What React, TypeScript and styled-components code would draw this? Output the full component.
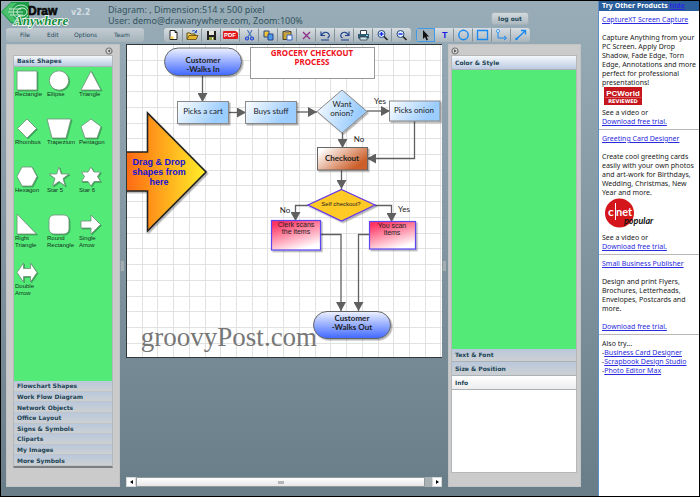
import React, { useState } from "react";
import styled, { createGlobalStyle } from "styled-components";

const sans = `"Liberation Sans", Arial, sans-serif`;
const compact = `Lato, "Liberation Sans", Arial, sans-serif`;
const wide = `"DejaVu Sans", Verdana, sans-serif`;
const humanist = `"Noto Sans", "DejaVu Sans", sans-serif`;

const Global = createGlobalStyle`
  *, *::before, *::after { box-sizing: border-box; }
  body { margin: 0; background: #000; }
  button { font: inherit; color: inherit; margin: 0; padding: 0; border: 0; background: none; cursor: pointer; }
`;

/* ---------- page frame ---------- */

const Page = styled.div`
  display: grid;
  grid-template-columns: minmax(0, 1fr) 101px;
  min-height: 100vh;
  padding: 1px;
  background: #000;
  font-family: ${wide};
`;

const Editor = styled.main`
  display: flex;
  flex-direction: column;
  min-width: 0;
  background: linear-gradient(#98adb7, #687d88);
`;

const Header = styled.header`
  display: flex;
  flex-direction: column;
  height: 43px;
  color: #34535f;
`;

const TitleRow = styled.div`
  display: flex;
  align-items: flex-start;
  height: 27px;
  padding-right: 69px;
`;

const LogoBox = styled.div`
  width: 70px;
  height: 27px;
  svg { display: block; overflow: visible; position: relative; z-index: 1; }
`;

const Version = styled.span`
  width: 37px;
  padding-top: 6px;
  color: #d5dee4;
  font-weight: bold;
  font-size: 8px;
  line-height: 12px;
`;

const Status = styled.p`
  flex: 1;
  margin: 0;
  padding-top: 3px;
  font-family: ${humanist};
  font-size: 9px;
  line-height: 11px;
  white-space: nowrap;
`;

const raised = `
  border: 1px solid #a3b0b8;
  border-radius: 3px;
  background: linear-gradient(#d3dade, #adb9c0);
`;

const LogOut = styled.button`
  ${raised}
  width: 38px;
  height: 13px;
  margin-top: 11px;
  color: #23495a;
  font-weight: bold;
  font-size: 6px;
  line-height: 10px;
`;

const BarRow = styled.div`
  display: flex;
  align-items: flex-start;
  padding-left: 5px;
`;

const MenuBar = styled.nav`
  display: flex;
  width: 138px;
  height: 14px;
  margin-right: 20px;
  padding-left: 14px;
  border-radius: 3px;
  background: linear-gradient(#c3ccd2, #a5b3bb);
`;

const MenuItem = styled.button<{ $width: number }>`
  width: ${(p) => p.$width}px;
  text-align: left;
  color: #23495a;
  font-size: 6px;
  line-height: 14px;
`;

const ToolGroup = styled.div`
  display: flex;
  height: 14px;
  margin-right: 5px;
  border-radius: 3px;
  overflow: hidden;
  background: linear-gradient(#d8dee2, #a9b5bc);
`;

const ToolButton = styled.button<{ $active?: boolean }>`
  display: flex;
  align-items: center;
  justify-content: center;
  width: 19px;
  border: 1px solid ${(p) => (p.$active ? "#3c9bea" : "transparent")};
  border-right-color: ${(p) => (p.$active ? "#3c9bea" : "#84939b")};
  background: ${(p) => (p.$active ? "#a4b2bb" : "none")};
  &:last-child { border-right-color: transparent; }
  svg { display: block; flex: none; }
`;

/* ---------- workspace ---------- */

const Workspace = styled.div`
  display: flex;
  flex: 1;
  padding: 0 17px 9px 5px;
  min-height: 0;
`;

const Panel = styled.aside<{ $width: number; $pad: string }>`
  display: flex;
  flex-direction: column;
  width: ${(p) => p.$width}px;
  padding: ${(p) => p.$pad};
  border: 1px solid #c0c4c6;
  background: #cbcbcb;
`;

const PanelTop = styled.div<{ $end?: boolean }>`
  display: flex;
  align-items: center;
  justify-content: ${(p) => (p.$end ? "flex-end" : "flex-start")};
  height: 10px;
  padding-top: 1px;
  svg { display: block; }
`;

const Accordion = styled.div<{ $heavy?: boolean }>`
  display: flex;
  flex: 1;
  flex-direction: column;
  border: 1px solid #b4b8bb;
  border-bottom: ${(p) => (p.$heavy ? "2px solid #7c7f81" : "1px solid #b4b8bb")};
`;

const Section = styled.button<{ $height: number; $tone?: "open" | "plain" }>`
  flex: none;
  height: ${(p) => p.$height}px;
  padding-left: 3px;
  text-align: left;
  color: #1d4556;
  font-weight: bold;
  font-size: 6px;
  line-height: ${(p) => p.$height - 1}px;
  border-bottom: 1px solid #aab1b7;
  background: ${(p) =>
    p.$tone === "open"
      ? "linear-gradient(#f4f8fc, #bccbe2)"
      : p.$tone === "plain"
        ? "linear-gradient(#ffffff, #ededed)"
        : "linear-gradient(#b9c8dc, #cdd0d2)"};
`;

const SectionList = styled.div`
  display: flex;
  flex-direction: column;
  height: 85px;
  ${Section} { flex: 1; height: auto; line-height: 9px; border-bottom-color: #bfc4c8; }
`;

const Green = styled.div`
  flex: 1;
  background: #54ea78;
`;

const Palette = styled(Green)`
  display: grid;
  grid-template-columns: repeat(3, 32px);
  grid-auto-rows: 48px;
  padding: 2px 0 0 1px;
`;

const ShapeButton = styled.button`
  display: flex;
  flex-direction: column;
  align-items: flex-start;
  text-align: left;
  color: #12331c;
  font-family: ${sans};
  font-size: 6px;
  line-height: 7px;
  svg { display: block; overflow: visible; filter: drop-shadow(1px 1px 0 rgba(20, 90, 40, 0.45)); }
`;

const InfoBody = styled.div`
  height: 82px;
  background: #fff;
`;

const Splitter = styled.div`
  display: flex;
  align-items: center;
  width: 6px;
  &::before { content: ""; width: 4px; height: 10px; background: #a3acb1; border-left: 1px solid #8d989e; }
`;

const Center = styled.section`
  display: flex;
  flex: 1;
  flex-direction: column;
  justify-content: space-between;
  min-width: 0;
`;

const Canvas = styled.div`
  overflow: hidden;
  width: 316px;
  max-width: 100%;
  border: 1px solid #30383c;
  border-right: 0;
  background: #fff;
  svg { display: block; }
`;

const ScrollBar = styled.div`
  display: flex;
  height: 10px;
  background: #a9b1b5;
`;

const ScrollArrow = styled.button`
  display: flex;
  align-items: center;
  justify-content: center;
  width: 10px;
  border: 1px solid #d6d9db;
  background: #fff;
`;

const Thumb = styled.div`
  display: flex;
  flex: 1;
  align-items: center;
  justify-content: center;
  margin-right: 7px;
  border: 1px solid #8f989d;
  border-radius: 1px;
  background: linear-gradient(#fff, #e6e6e6);
  &::before { content: ""; width: 6px; height: 3px; background: #b5b5b5; }
`;

/* ---------- product column ---------- */

const Products = styled.aside`
  overflow: hidden;
  border-left: 1px solid #5b8fc6;
  background: #fff;
  color: #222;
  font-family: ${humanist};
  font-size: 7px;
  line-height: 9px;
  white-space: nowrap;
`;

const ProductsTitle = styled.h2`
  margin: 0;
  padding-left: 3px;
  height: 10px;
  background: #2c609c;
  color: #fff;
  font-size: 7px;
  line-height: 10px;
`;

const Link = styled.a`
  color: #2a2ae0;
  text-decoration: underline;
`;

const Product = styled.section`
  padding: 4px 0 3px 3px;
  border-bottom: 1px solid #b8b8b8;
  &:last-child { border-bottom: 0; }
  p { margin: 0; }
  svg { display: block; }
`;

const Blurb = styled.p`
  && { margin: 9px 0 0; }
  white-space: pre;
`;

const Gap = styled.div`
  height: 9px;
`;

/* ---------- drawings ---------- */

function Logo() {
  return (
    <svg width="70" height="30" viewBox="0 0 70 30" role="img" aria-label="Draw Anywhere">
      <path d="M0 11L10 1H28V20L20 25L10 22z" fill="#1d9c46" />
      <path d="M1 11L10 2H16Q9 7 11 13Q13 19 21 23L11 21z" fill="#49c06c" />
      <ellipse cx="20" cy="11" rx="8" ry="7" fill="none" stroke="#bfe8ca" />
      <ellipse cx="21" cy="11" rx="5" ry="4" fill="none" stroke="#d9f4df" />
      <path d="M8 8H20M7 11H22M9 14H22" stroke="#e6f7ea" strokeWidth="0.800" />
      <text x="27" y="14" fontFamily={sans} fontWeight="bold" fontSize="12" fill="#0a0a0a" stroke="#0a0a0a" strokeWidth="0.600">Draw</text>
      <text x="13" y="24" fontFamily={`"Liberation Serif", serif`} fontWeight="bold" fontStyle="italic" fontSize="13" fill="#118c3a" stroke="#fff" strokeWidth="1.500" paintOrder="stroke">Anywhere</text>
    </svg>
  );
}

const icons: Record<string, React.ReactNode> = {
  New: (
    <>
      <path d="M3 1.500h5l2 2v7H3z M8 1.500v2h2" fill="#fff" stroke="#222" />
      <path d="M3.500 7.500h3v2.500h-3z" fill="#f4d24a" />
    </>
  ),
  Open: (
    <>
      <path d="M1 10V4h3l1 1h4v2" fill="#f3d663" stroke="#5b4a12" />
      <path d="M1 10.500l2-4h9l-2 4z" fill="#e6b52c" stroke="#5b4a12" strokeWidth="0.800" />
      <path d="M6 2q3-1.500 4 1M10.500 1v2.500h-2" stroke="#2454c8" fill="none" />
    </>
  ),
  Save: (
    <>
      <path d="M2 2h9v9H2z" fill="#222" />
      <path d="M4 2h5v4H4z" fill="#e9e9e0" />
      <path d="M4 8h5v3H4z" fill="#8f9a3c" />
      <path d="M7 8.500h1v2H7z" fill="#fff" />
    </>
  ),
  Cut: (
    <>
      <path d="M4.500 1l4 7M9 1L5 8" stroke="#4a78b8" strokeWidth="1.200" />
      <circle cx="4" cy="9.500" r="1.500" fill="none" stroke="#1c3fd8" strokeWidth="1.200" />
      <circle cx="9" cy="9.500" r="1.500" fill="none" stroke="#1c3fd8" strokeWidth="1.200" />
    </>
  ),
  Copy: (
    <>
      <path d="M2 2h5v6H2z" fill="#f2c530" stroke="#24448c" />
      <path d="M6 5h5v6H6z" fill="#4a9ae8" stroke="#24448c" />
    </>
  ),
  Paste: (
    <>
      <path d="M2 2.500h8v8H2z" fill="#c9a338" stroke="#4a431e" />
      <path d="M4 1h4v2.500H4z" fill="#777" />
      <path d="M6 6h5v5H6z" fill="#eef4ff" stroke="#3562c0" />
    </>
  ),
  Delete: <path d="M3 3l7 7M10 3l-7 7" stroke="#8c2a86" strokeWidth="1.200" />,
  Undo: <path d="M2 2.500v4h4M2.500 6q3-4.500 7-1.500q2 3-1 4.500M2 11h8" stroke="#1b3f8c" fill="none" strokeWidth="1.100" />,
  Redo: <path d="M11 2.500v4H7M10.500 6q-3-4.500-7-1.500q-2 3 1 4.500M3 11h8" stroke="#1b3f8c" fill="none" strokeWidth="1.100" />,
  Print: (
    <>
      <path d="M3.500 5V1.500h6V5" fill="#fff" stroke="#345" />
      <path d="M1 5h11v4.500H1z" fill="#2f5a72" />
      <path d="M3 8h7v3H3z" fill="#cfe2ea" stroke="#234" strokeWidth="0.700" />
      <path d="M9 6h2v1H9z" fill="#7fe0ff" />
    </>
  ),
  "Zoom in": (
    <>
      <circle cx="5.500" cy="5" r="3.500" fill="#dff0fa" stroke="#2a4a78" />
      <path d="M3.500 5h4M5.500 3v4" stroke="#1a30e8" strokeWidth="1.400" />
      <path d="M8 7.500l3.500 3.500" stroke="#222" strokeWidth="1.600" />
    </>
  ),
  "Zoom out": (
    <>
      <circle cx="5.500" cy="5" r="3.500" fill="#dff0fa" stroke="#2a4a78" />
      <path d="M3.500 5h4" stroke="#1a30e8" strokeWidth="1.400" />
      <path d="M8 7.500l3.500 3.500" stroke="#222" strokeWidth="1.600" />
    </>
  ),
  Select: <path d="M4 1v9l2-2 1.500 3.500 1.500-.7L7.500 7.500H10z" fill="#111" />,
  Ellipse: <circle cx="6.500" cy="6" r="4.700" fill="none" stroke="#1688f0" strokeWidth="1.400" />,
  Rectangle: <path d="M1.500 1.500h10v9h-10z" fill="none" stroke="#1688f0" strokeWidth="1.300" />,
  Connector: (
    <>
      <path d="M3 3.500v5.500h8M9 7l2.500 2L9 11" fill="none" stroke="#1688f0" />
      <circle cx="3" cy="2" r="1.500" fill="#fff" stroke="#1688f0" strokeWidth="0.800" />
    </>
  ),
  Line: (
    <>
      <path d="M2.500 10L11 2M7 1.500h4.500v4" fill="none" stroke="#1688f0" strokeWidth="1.300" />
      <circle cx="2.500" cy="10" r="1.300" fill="#1688f0" />
    </>
  ),
};

function Glyph({ name }: { name: string }) {
  if (name === "Export PDF") {
    return (
      <svg width="16" height="12" viewBox="0 0 16 12">
        <rect x="0" y="2" width="15" height="8" rx="1" fill="#e0191c" />
        <path d="M12 1h3v3z" fill="#fff" />
        <text x="1" y="8" fontFamily={sans} fontWeight="bold" fontSize="6" fill="#fff">PDF</text>
      </svg>
    );
  }
  if (name === "Text") {
    return (
      <svg width="13" height="12" viewBox="0 0 13 12">
        <text x="4" y="9" fontFamily={sans} fontWeight="bold" fontSize="9" fill="#1a1ae8">T</text>
      </svg>
    );
  }
  return <svg width="13" height="12" viewBox="0 0 13 12" fill="none">{icons[name]}</svg>;
}

const shapes: [string, string, React.ReactNode][] = [
  ["Rectangle", "", <path d="M2 2h20v19H2z" />],
  ["Ellipse", "", <circle cx="12" cy="11.500" r="9.700" />],
  ["Triangle", "", <path d="M12 2l10 19H2z" />],
  ["Rhombus", "", <path d="M12 2l9.500 9.500L12 21l-9.500-9.500z" />],
  ["Trapezium", "", <path d="M0 2h24l-5 19H5z" />],
  ["Pentagon", "", <path d="M12 2l10 7.500-4 11.500H6L2 9.500z" />],
  ["Hexagon", "", <path d="M7 2h10l5 9.500L17 21H7l-5-9.500z" />],
  ["Star 5", "", <path d="M12 2l2.300 7H22l-6 4.500L18.300 21 12 16.400 5.700 21 8 13.500 2 9h7.700z" />],
  ["Star 6", "", <path d="M12 2l3 5h6.500l-3 4.500 3 5H15l-3 4.500-3-4.500H2.500l3-5-3-4.500H9z" />],
  ["Right", "Triangle", <path d="M2 1l19.500 20H2z" />],
  ["Round", "Rectangle", <rect x="2" y="2" width="20" height="19" rx="5" />],
  ["Single", "Arrow", <path d="M2 8h10V2l9.500 9.500L12 21v-6H2z" />],
  ["Double", "Arrow", <path d="M2 11.500L8.500 2v5.500h7V2L22 11.500 15.500 21v-5.500h-7V21z" />],
];

function Collapse({ left }: { left?: boolean }) {
  return (
    <svg width="8" height="8" viewBox="0 0 8 8">
      <circle cx="4" cy="4" r="3" fill="#ddd" stroke="#777" strokeWidth="1.200" />
      <path d={left ? "M5.200 2.300v3.400L2.500 4z" : "M3 2.300v3.400L5.700 4z"} fill="#555" />
    </svg>
  );
}

type LabelProps = { x: number; y: number; size?: number; lead?: number; bold?: boolean; fill?: string; font?: string; lines: string[] };

function Label({ x, y, size = 8, lead = 9, bold, fill = "#222", font = compact, lines }: LabelProps) {
  return (
    <text textAnchor="middle" fontFamily={font} fontSize={size} fontWeight={bold ? "bold" : "normal"} fill={fill}>
      {lines.map((line, i) => (
        <tspan key={line} x={x} y={y + i * lead}>{line}</tspan>
      ))}
    </text>
  );
}

const gridSteps = Array.from({ length: 20 }, (_, i) => Math.round((i + 1) * 15.72));

function Diagram() {
  return (
    <svg width="316" height="312" viewBox="127 45 316 312" role="img" aria-label="Grocery checkout process">
      <defs>
        <linearGradient id="blue" x1="0" y1="0" x2="0" y2="1"><stop offset="0" stopColor="#eef2ff" /><stop offset="1" stopColor="#3f68ff" /></linearGradient>
        <linearGradient id="sky" x1="0" y1="0" x2="1" y2="0.300"><stop offset="0" stopColor="#fff" /><stop offset="0.900" stopColor="#9ccdff" /></linearGradient>
        <linearGradient id="copper" x1="0" y1="0" x2="1" y2="0.600"><stop offset="0.100" stopColor="#fff" /><stop offset="0.950" stopColor="#cc5f2a" /></linearGradient>
        <linearGradient id="rose" x1="0.200" y1="0" x2="0.700" y2="1"><stop offset="0.050" stopColor="#ff3563" /><stop offset="0.950" stopColor="#fff" /></linearGradient>
        <linearGradient id="flame" x1="0" y1="0" x2="1" y2="0"><stop offset="0" stopColor="#ff5f0f" /><stop offset="1" stopColor="#fff02a" /></linearGradient>
        <filter id="shade" x="-10%" y="-10%" width="130%" height="140%"><feDropShadow dx="1.500" dy="1.500" stdDeviation="0.500" floodColor="#000" floodOpacity="0.300" /></filter>
        <marker id="tip" viewBox="0 0 9 10" refX="9" refY="5" markerWidth="9" markerHeight="10" markerUnits="userSpaceOnUse" orient="auto"><path d="M0 0L9 5L0 10z" fill="#606060" /></marker>
      </defs>
      <g stroke="#e2e2e2" shapeRendering="crispEdges">
        {gridSteps.map((s) => <path key={s} d={`M${126 + s}.500 44V358M126 ${44 + s}.500H443`} />)}
      </g>

      <rect x="250.500" y="47.500" width="124" height="31" fill="#fff" stroke="#999" />
      <Label x={312} y={56} bold font={humanist} fill="#f01020" lines={["GROCERY CHECKOUT", "PROCESS"]} />

      <g fill="none" stroke="#606060" strokeWidth="1.300">
        <path d="M202.500 76V102" markerEnd="url(#tip)" />
        <path d="M228 112.500H246" markerEnd="url(#tip)" />
        <path d="M296 112H317" markerEnd="url(#tip)" />
        <path d="M367 111H390" markerEnd="url(#tip)" />
        <path d="M342.500 133V148" markerEnd="url(#tip)" />
        <path d="M414.500 121V158.500H367" markerEnd="url(#tip)" />
        <path d="M341.500 170V189" markerEnd="url(#tip)" />
        <path d="M308 205.500H295.500V221" markerEnd="url(#tip)" />
        <path d="M375 205.500H391.500V222" markerEnd="url(#tip)" />
        <path d="M320 234.500H341V311" markerEnd="url(#tip)" />
        <path d="M370 234.500H358.500V311" markerEnd="url(#tip)" />
      </g>

      <g stroke="#666" filter="url(#shade)">
        <rect x="164.500" y="48" width="77" height="27.500" rx="13.700" fill="url(#blue)" />
        <rect x="313.500" y="311.500" width="77" height="27" rx="13.500" fill="url(#blue)" />
        <g stroke="#888" fill="url(#sky)">
          <rect x="177.500" y="101.500" width="51" height="22" />
          <rect x="245.500" y="101.500" width="51" height="22" />
          <rect x="389.500" y="101" width="50.500" height="20" />
          <path d="M342 90L367 111.500L342 133L317 111.500z" />
        </g>
        <rect x="317.500" y="147.500" width="50" height="22.500" fill="url(#copper)" />
        <path d="M341.500 189.500L375 205L341.500 221L308 205z" fill="#ffc928" stroke="#6438e8" strokeWidth="1.300" />
        <rect x="271.500" y="220.500" width="49" height="29.500" fill="url(#rose)" stroke="#5b45ee" strokeWidth="1.200" />
        <rect x="369.500" y="221.500" width="46" height="27.500" fill="url(#rose)" stroke="#5b45ee" strokeWidth="1.200" />
        <path d="M120 152H147.500V113L206 172L147.500 231V191H120z" fill="url(#flame)" stroke="#222" strokeWidth="1.600" />
      </g>

      <Label x={203} y={63} bold lines={["Customer", "-Walks In"]} />
      <Label x={352} y={321} bold lines={["Customer", "-Walks Out"]} />
      <Label x={203} y={114} lines={["Picks a cart"]} />
      <Label x={271} y={114} lines={["Buys stuff"]} />
      <Label x={342} y={107} lines={["Want", "onion?"]} />
      <Label x={414} y={113} lines={["Picks onion"]} />
      <Label x={380} y={104} lines={["Yes"]} />
      <Label x={359} y={142} lines={["No"]} />
      <Label x={342} y={161} bold lines={["Checkout"]} />
      <Label x={341} y={206} size={6} font={sans} lines={["Self checkout?"]} />
      <Label x={285} y={213} lines={["No"]} />
      <Label x={404} y={212} lines={["Yes"]} />
      <Label x={296} y={227} size={7} lead={7} font={sans} lines={["Clerk scans", "the items"]} />
      <Label x={392} y={228} size={7} lead={7} font={sans} lines={["You scan", "items"]} />
      <Label x={159} y={165} size={9} lead={10} bold fill="#1410d8" font={sans} lines={["Drag & Drop", "shapes from", "here"]} />
      <Label x={229} y={346} size={27} fill="#777" font={`"Liberation Serif", serif`} lines={["groovyPost.com"]} />
    </svg>
  );
}

function PCWorld() {
  return (
    <svg width="42" height="21" viewBox="0 0 42 21" role="img" aria-label="PCWorld reviewed">
      <rect x="2" y="0" width="38" height="18" fill="#c4161c" />
      <text x="21" y="9" textAnchor="middle" fontFamily={sans} fontWeight="bold" fontSize="8" fill="#fff">PCWorld</text>
      <path d="M3 10.500H39" stroke="#e98a8c" strokeWidth="0.600" />
      <text x="21" y="16" textAnchor="middle" fontFamily={wide} fontWeight="bold" fontSize="5" fill="#fff">REVIEWED</text>
    </svg>
  );
}

function CNet() {
  return (
    <svg width="60" height="36" viewBox="0 0 60 36" role="img" aria-label="cnet popular">
      <circle cx="17.500" cy="16" r="14.500" fill="#d4151b" />
      <text x="6" y="19" fontFamily={compact} fontWeight="bold" fontSize="12" fill="#fff">c</text>
      <path d="M13.500 6V23" stroke="#fff" />
      <text x="14" y="19" fontFamily={compact} fontWeight="bold" fontSize="11" fill="#fff">net</text>
      <text x="22" y="27" fontFamily={compact} fontWeight="bold" fontStyle="italic" fontSize="9" fill="#111">popular</text>
    </svg>
  );
}

/* ---------- app ---------- */

const menus: [string, number][] = [["File", 27], ["Edit", 27], ["Options", 40], ["Team", 26]];
const fileTools = ["New", "Open", "Save", "Export PDF", "Cut", "Copy", "Paste", "Delete", "Undo", "Redo", "Print", "Zoom in", "Zoom out"];
const drawTools = ["Select", "Text", "Ellipse", "Rectangle", "Connector", "Line"];
const libraries = ["Flowchart Shapes", "Work Flow Diagram", "Network Objects", "Office Layout", "Signs & Symbols", "Cliparts", "My Images", "More Symbols"];

export default function App() {
  const [tool, setTool] = useState("Select");
  return (
    <Page>
      <Global />
      <Editor>
        <Header>
          <TitleRow>
            <LogoBox><Logo /></LogoBox>
            <Version>v2.2</Version>
            <Status>
              Diagram: , Dimension:514 x 500 pixel<br />
              User: demo@drawanywhere.com, Zoom:100%
            </Status>
            <LogOut>log out</LogOut>
          </TitleRow>
          <BarRow>
            <MenuBar>
              {menus.map(([name, width]) => <MenuItem key={name} $width={width}>{name}</MenuItem>)}
            </MenuBar>
            <ToolGroup>
              {fileTools.map((name) => <ToolButton key={name} aria-label={name}><Glyph name={name} /></ToolButton>)}
            </ToolGroup>
            <ToolGroup>
              {drawTools.map((name) => (
                <ToolButton key={name} aria-label={name} $active={tool === name} onClick={() => setTool(name)}>
                  <Glyph name={name} />
                </ToolButton>
              ))}
            </ToolGroup>
          </BarRow>
        </Header>
        <Workspace>
          <Panel $width={114} $pad="0 6px 18px 6px">
            <PanelTop $end><button aria-label="Collapse shapes"><Collapse left /></button></PanelTop>
            <Accordion $heavy>
              <Section $height={11} $tone="open">Basic Shapes</Section>
              <Palette>
                {shapes.map(([first, second, art]) => (
                  <ShapeButton key={first}>
                    <svg width="28" height="22" viewBox="0 0 28 22" fill="#fff" stroke="#6f8f78" strokeWidth="0.800">{art}</svg>
                    <span>{first}{second && <><br />{second}</>}</span>
                  </ShapeButton>
                ))}
              </Palette>
              <SectionList>
                {libraries.map((name) => <Section key={name} $height={11}>{name}</Section>)}
              </SectionList>
            </Accordion>
          </Panel>
          <Splitter />
          <Center>
            <Canvas><Diagram /></Canvas>
            <ScrollBar>
              <ScrollArrow aria-label="Scroll left"><svg width="3" height="4" viewBox="0 0 3 4"><path d="M3 0v4L0 2z" /></svg></ScrollArrow>
              <Thumb />
              <ScrollArrow aria-label="Scroll right"><svg width="3" height="4" viewBox="0 0 3 4"><path d="M0 0v4l3-2z" /></svg></ScrollArrow>
            </ScrollBar>
          </Center>
          <Splitter />
          <Panel $width={133} $pad="0 3px 13px 2px">
            <PanelTop><button aria-label="Collapse properties"><Collapse /></button></PanelTop>
            <Accordion>
              <Section $height={14} $tone="open">Color &amp; Style</Section>
              <Green />
              <Section $height={13}>Text &amp; Font</Section>
              <Section $height={14}>Size &amp; Position</Section>
              <Section $height={14} $tone="plain">Info</Section>
              <InfoBody />
            </Accordion>
          </Panel>
        </Workspace>
      </Editor>
      <Products>
        <ProductsTitle>Try Other Products <Link href="#hide">hide</Link></ProductsTitle>
        <Product>
          <Link href="#capture">CaptureXT Screen Capture</Link>
          <Blurb>{"Capture Anything from your\nPC Screen. Apply Drop\nShadow, Fade Edge, Torn\nEdge, Annotations and more\nperfect for professional\npresentations!"}</Blurb>
          <PCWorld />
          <p>See a video or<br /><Link href="#capture-trial">Download free trial.</Link></p>
        </Product>
        <Product>
          <Link href="#cards">Greeting Card Designer</Link>
          <Blurb>{"Create cool greeting cards\neasily with your own photos\nand art-work for Birthdays,\nWedding, Christmas, New\nYear and more."}</Blurb>
          <CNet />
          <p>See a video or<br /><Link href="#cards-trial">Download free trial.</Link></p>
        </Product>
        <Product>
          <Link href="#publisher">Small Business Publisher</Link>
          <Blurb>{"Design and print Flyers,\nBrochures, Letterheads,\nEnvelopes, Postcards and\nmore."}</Blurb>
          <Gap />
          <Link href="#publisher-trial">Download free trial.</Link>
        </Product>
        <Product>
          <p>
            Also try...<br />
            -<Link href="#business">Business Card Designer</Link><br />
            -<Link href="#scrapbook">Scrapbook Design Studio</Link><br />
            -<Link href="#photo">Photo Editor Max</Link>
          </p>
        </Product>
      </Products>
    </Page>
  );
}
